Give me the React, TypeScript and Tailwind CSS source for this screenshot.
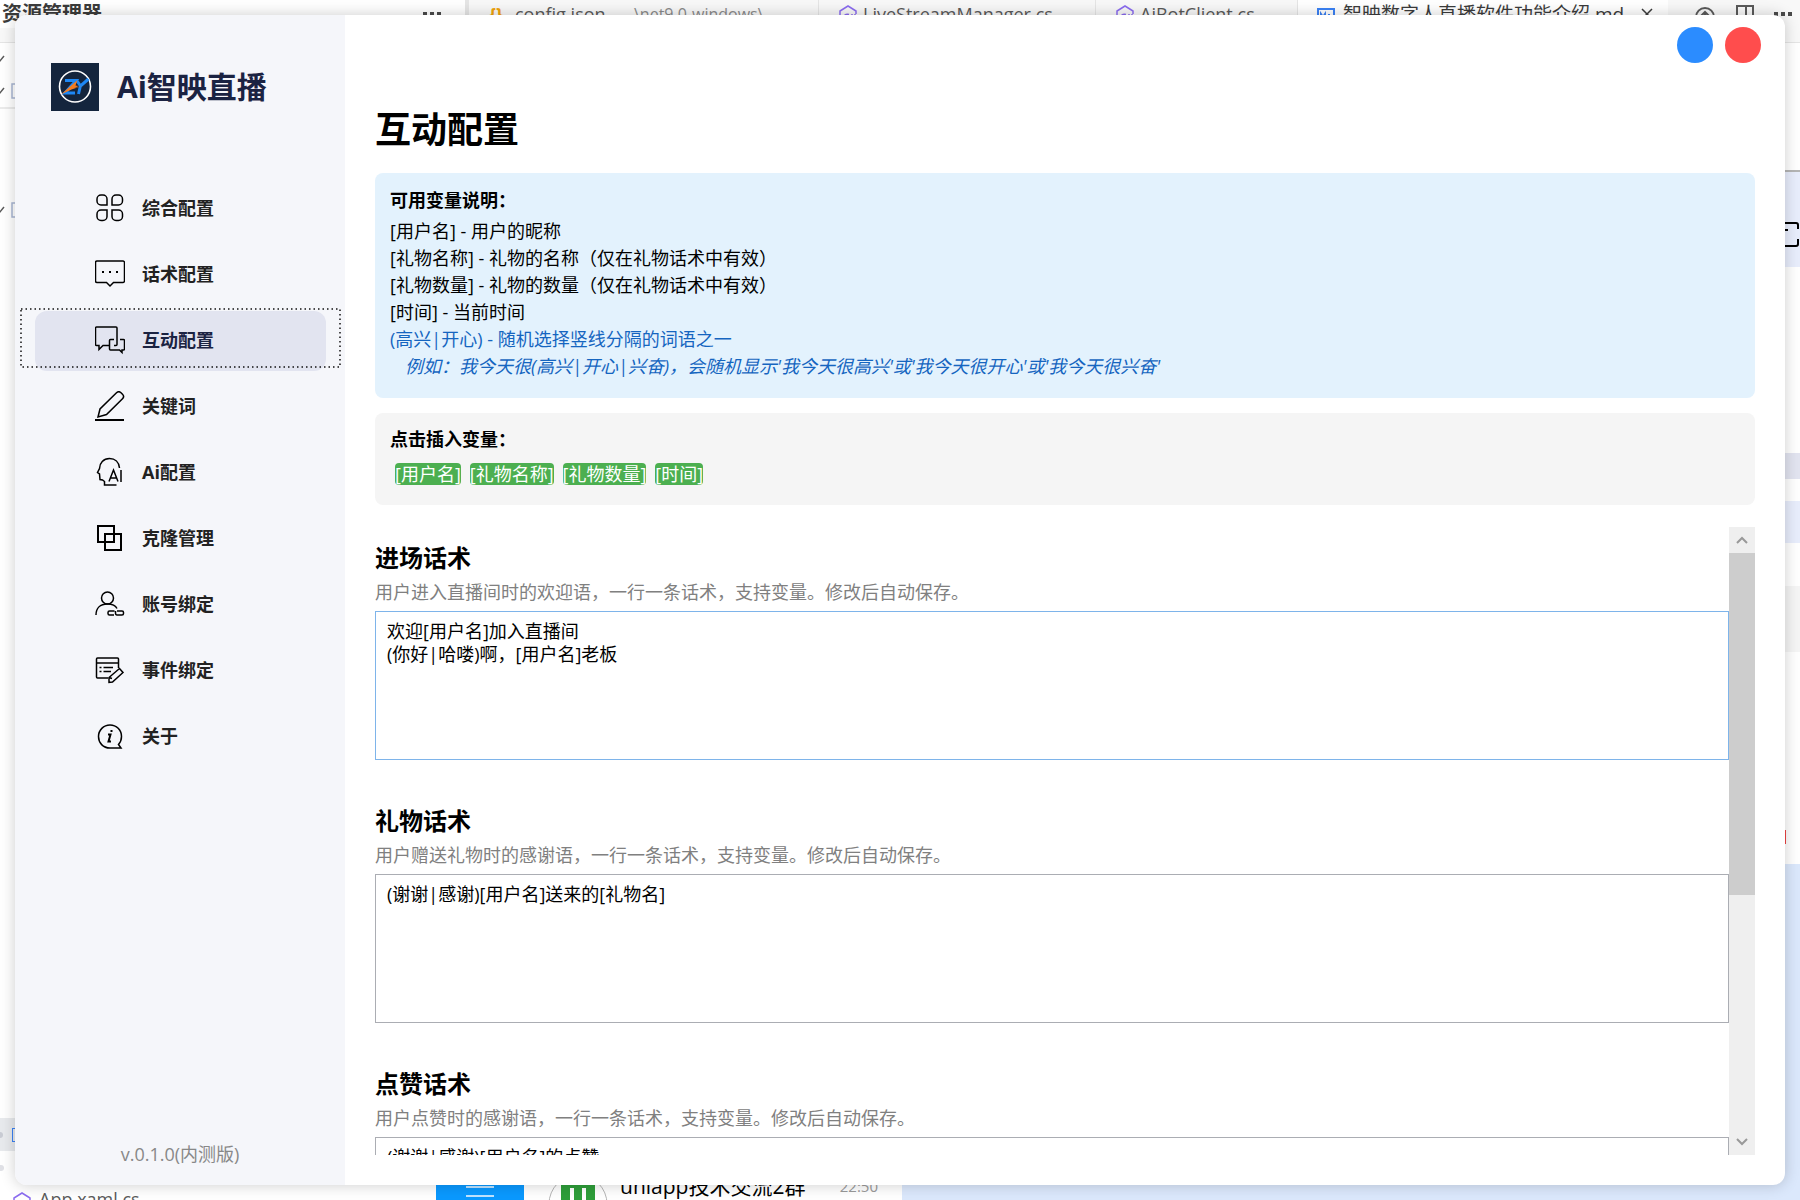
import React, { useState } from 'react';
import { clsx } from 'clsx';

interface NavItem {
  id: string;
  label: string;
  icon: React.ReactNode;
}

interface ScriptSection {
  id: string;
  title: string;
  hint: string;
  value: string;
}

const ICON = {
  width: 30,
  height: 30,
  viewBox: '0 0 30 30',
  fill: 'none',
  stroke: '#000',
  strokeWidth: 1.5,
  'aria-hidden': true,
};

const NAV_ITEMS: NavItem[] = [
  {
    id: 'general',
    label: '综合配置',
    icon: (
      <svg {...ICON}>
        <path d="M6 2h2a4 4 0 0 1 4 4v6H6a4 4 0 0 1-4-4V6a4 4 0 0 1 4-4zM17 12V6a4 4 0 0 1 4-4h2.500a4 4 0 0 1 4 4v2a4 4 0 0 1-4 4zM6 17h6v6.500a4 4 0 0 1-4 4H6a4 4 0 0 1-4-4V21a4 4 0 0 1 4-4zM17 17h6.500a4 4 0 0 1 4 4v2.500a4 4 0 0 1-4 4H21a4 4 0 0 1-4-4z" />
      </svg>
    ),
  },
  {
    id: 'scripts',
    label: '话术配置',
    icon: (
      <svg {...ICON}>
        <path d="M2 2h26a1.500 1.500 0 0 1 1.500 1.500v18.500a1.500 1.500 0 0 1-1.500 1.500h-9.500L15 27l-3.500-3.500H2a1.500 1.500 0 0 1-1.500-1.500V3.500A1.500 1.500 0 0 1 2 2z" />
        <path d="M7 13h2M14 13h2M21 13h2" strokeWidth="2" />
      </svg>
    ),
  },
  {
    id: 'interaction',
    label: '互动配置',
    icon: (
      <svg {...ICON}>
        <path d="M14 20.500H8L4 24.500v-4H1.500a1 1 0 0 1-1-1V3a1 1 0 0 1 1-1H21a1 1 0 0 1 1 1v16.500a1 1 0 0 1-1 1h-2" />
        <path d="M19 14.500h-3.500a1 1 0 0 0-1 1v8.500a1 1 0 0 0 1 1h9l2.500 2.500V25h1.500a1 1 0 0 0 1-1v-8.500a1 1 0 0 0-1-1H25" />
      </svg>
    ),
  },
  {
    id: 'keywords',
    label: '关键词',
    icon: (
      <svg {...ICON}>
        <path d="M3 26l2-8L21.500 1.800a3.200 3.200 0 0 1 4.500 0l1.500 1.500a3.200 3.200 0 0 1 0 4.500L11.500 23.500z" />
        <path d="M0 29h29" strokeWidth="2" />
      </svg>
    ),
  },
  {
    id: 'ai',
    label: 'Ai配置',
    icon: (
      <svg {...ICON}>
        <path d="M24.500 11C24 5 20 1.500 14.500 1.500 8.500 1.500 4.500 6 4.500 11.500L2.500 15.500l2 1.500.500 5.500 2.500.500 2 1.500V28H21.500" />
        <path d="M14 24.500L18.500 13 23 24.500M15.500 21h6M26 13v12" />
      </svg>
    ),
  },
  {
    id: 'clone',
    label: '克隆管理',
    icon: (
      <svg {...ICON} strokeWidth={2}>
        <path d="M3 3h16v16H3zM10 11h16v16H10z" />
      </svg>
    ),
  },
  {
    id: 'account',
    label: '账号绑定',
    icon: (
      <svg {...ICON}>
        <circle cx="12.500" cy="9" r="6" />
        <path d="M1 26c0-6.500 4-11 11.500-11 4.500 0 8 1.500 9.500 4.500" />
        <path d="M19.500 22h-5a1.500 1.500 0 0 0-1.500 1.500v1A1.500 1.500 0 0 0 14.500 26H19M22 22h5a1.500 1.500 0 0 1 1.500 1.500v1A1.500 1.500 0 0 1 27 26h-5c-1.500 0-1.500-1-1.500-2v-2" />
      </svg>
    ),
  },
  {
    id: 'events',
    label: '事件绑定',
    icon: (
      <svg {...ICON}>
        <path d="M23.500 13V4a1 1 0 0 0-1-1h-20a1 1 0 0 0-1 1v18a1 1 0 0 0 1 1H13M1.500 8h22" />
        <path d="M4.500 12.500h2M8.500 12.500H18M4.500 16.500h2M8.500 16.500H16" />
        <path d="M14 27.500v-5l10.500-9 3.500 4L17.500 27zM14 22.500l3 1" />
      </svg>
    ),
  },
  {
    id: 'about',
    label: '关于',
    icon: (
      <svg {...ICON}>
        <path d="M23.500 23.500L26 27H15C8 27 3.500 21.800 3.500 15.500S8.500 4 15 4s11.500 5 11.500 11.500c0 3.200-1.200 6-3 8z" />
        <path d="M13 13.500h2.500l-2 7H16M16.500 9v2" strokeWidth="2" />
      </svg>
    ),
  },
];

const VARIABLES = ['[用户名]', '[礼物名称]', '[礼物数量]', '[时间]'];

const SECTIONS: ScriptSection[] = [
  {
    id: 'enter',
    title: '进场话术',
    hint: '用户进入直播间时的欢迎语，一行一条话术，支持变量。修改后自动保存。',
    value: '欢迎[用户名]加入直播间\n(你好|哈喽)啊，[用户名]老板',
  },
  {
    id: 'gift',
    title: '礼物话术',
    hint: '用户赠送礼物时的感谢语，一行一条话术，支持变量。修改后自动保存。',
    value: '(谢谢|感谢)[用户名]送来的[礼物名]',
  },
  {
    id: 'like',
    title: '点赞话术',
    hint: '用户点赞时的感谢语，一行一条话术，支持变量。修改后自动保存。',
    value: '(谢谢|感谢)[用户名]的点赞',
  },
];

function Logo() {
  return (
    <svg width="48" height="48" viewBox="0 0 48 48" aria-hidden="true">
      <path d="M0 0h48v48H0z" fill="#14253d" />
      <circle cx="24" cy="23.500" r="15.500" fill="none" stroke="#fff" strokeWidth="1.600" />
      <path d="M14 17.500h11L14 30h10M25.500 17l4 6 8-7M29.500 22.500L27.500 31" fill="none" stroke="#1e88f5" strokeWidth="3" />
      <path d="M10 31.500L26.500 17l-2 5.500 3 .500-4 2 9-2.500-12 4z" fill="#f57c1f" />
    </svg>
  );
}

function CSharpIcon() {
  return (
    <svg width="18" height="20" viewBox="0 0 18 20" fill="none" stroke="#8b6cf0" strokeWidth="1.500" className="shrink-0" aria-hidden="true">
      <path d="M5 18l-4-2.500V6l8-5 8 5v3" />
      <path d="M10 9.500c-3.500-1-5 1-5 3.500s1.500 4.500 5 3.500M13 9v6M16 9v6M11.500 11h6M11.500 13.500h6" />
    </svg>
  );
}

function DotsIcon() {
  return (
    <svg className="mt-3" width="18" height="5" viewBox="0 0 18 5" fill="#4a4a4a" aria-hidden="true">
      <path d="M0 0h4v4H0zM7 0h4v4H7zM14 0h4v4h-4z" />
    </svg>
  );
}

// Editor and chat windows that show around the edges of the app window
function Desktop() {
  return (
    <div className="absolute inset-0 overflow-hidden bg-white text-[18px] text-[#5a5a5a]" aria-hidden="true">
      <div className="flex h-[43px] items-start whitespace-nowrap border-b border-[#e5e5e5] bg-[#f8f8f8] leading-[28px]">
        <div className="flex w-[465px] items-start justify-between bg-white pl-[2px] pr-[24px]">
          <span className="text-[20px] font-bold text-[#3b3b3b]">资源管理器</span>
          <DotsIcon />
        </div>
        <div className="flex h-full w-[354px] items-start border-l-4 border-r border-[#e5e5e5] pl-[20px]">
          <span className="w-[26px] font-bold text-[#f0a30a]">{'{}'}</span>
          <span>config.json</span>
          <span className="ml-5 text-[16px] text-[#8a8a8a]">..\net9.0-windows\</span>
        </div>
        <div className="flex h-full w-[277px] gap-[6px] border-r border-[#e5e5e5] pl-[20px]">
          <span className="pt-[5px]"><CSharpIcon /></span>
          <span>LiveStreamManager.cs</span>
        </div>
        <div className="flex h-full w-[202px] gap-[6px] border-r border-[#e5e5e5] pl-[20px]">
          <span className="pt-[5px]"><CSharpIcon /></span>
          <span>AiBotClient.cs</span>
        </div>
        <div className="flex h-full w-[370px] bg-white pl-[19px] text-[#3b3b3b]">
          <svg className="mt-2 mr-2" width="18" height="16" viewBox="0 0 18 16" fill="none" stroke="#3b82f6" strokeWidth="2">
            <path d="M1 1h16v14H1zM4 11V6l2 3 2-3v5M12 6v5M10 9l2 2 2-2" />
          </svg>
          <span className="flex-1 text-[19px]">智映数字人直播软件功能介绍.md</span>
          <svg className="mt-2 mr-[15px]" width="12" height="12" viewBox="0 0 12 12" fill="none" stroke="#3b3b3b" strokeWidth="1.500">
            <path d="M1 1l10 10M11 1L1 11" />
          </svg>
        </div>
        <div className="flex flex-1 items-start gap-[20px] pl-[26px]">
          <svg className="mt-[6px]" width="22" height="22" viewBox="0 0 22 22" fill="none" stroke="#5a5a5a" strokeWidth="2">
            <circle cx="11" cy="11" r="9" />
            <path d="M11 6v8M7 10l4-4 4 4" />
          </svg>
          <svg className="mt-[5px]" width="18" height="18" viewBox="0 0 18 18" fill="none" stroke="#5a5a5a" strokeWidth="2">
            <path d="M1 1h16v16H1zM10 1v16" />
          </svg>
          <DotsIcon />
        </div>
      </div>

      {/* explorer tree */}
      <div className="absolute left-0 top-[43px] flex h-full w-[436px] flex-col bg-white">
        <svg width="16" height="200" viewBox="0 0 16 200" fill="none" stroke="#5a5a5a" strokeWidth="1.500" className="shrink-0">
          <path d="M-4 15l3 4 5-6M-4 47l3 4 5-6M-4 166l3 4 5-6" />
          <path d="M16 41h-4v14h4M16 160h-4v14h4" stroke="#a9b6d3" />
          <path d="M0 65h16" stroke="#e5e5e5" />
        </svg>
        <div className="mt-[875px] flex h-[33px] w-4 shrink-0 items-center bg-[#e8eaed]">
          <span className="h-[6px] w-1 rounded-r-full bg-[#c9ccd4]" />
          <span className="ml-[9px] h-[14px] w-1 border-y border-l border-[#3b82f6]" />
        </div>
        <div className="flex h-[33px] w-4 shrink-0 items-center">
          <span className="h-[6px] w-1 rounded-r-full bg-[#e0e1e6]" />
        </div>
        <div className="flex items-start gap-2 pl-[13px] pt-2">
          <CSharpIcon />
          <span className="leading-[14px]">App.xaml.cs</span>
        </div>
      </div>

      {/* windows on the right */}
      <div className="absolute right-0 top-[170px] flex h-full w-4 flex-col border-t-2 border-[#b5b5b5] bg-[#dbe8fc]">
        <div className="h-[95px] shrink-0 bg-[#e8edfc] pt-[50px]">
          <svg width="16" height="26" viewBox="0 0 16 26" fill="none" stroke="#000" strokeWidth="2">
            <path d="M0 1h12a2 2 0 0 1 2 2v4M14 17v5a2 2 0 0 1-2 2H0M0 8h4" />
          </svg>
        </div>
        <div className="h-[186px] shrink-0 bg-white" />
        <div className="h-[26px] shrink-0 bg-[#e2e4f0]" />
        <div className="h-[22px] shrink-0 bg-white" />
        <div className="h-[42px] shrink-0 bg-[#e8edfc]" />
        <div className="h-[43px] shrink-0 bg-white" />
        <div className="h-[66px] shrink-0 bg-[#f5f5f5]" />
        <div className="h-[212px] shrink-0 bg-white pt-[178px]">
          <div className="h-[14px] w-[2px] bg-[#ef4444]" />
        </div>
      </div>

      {/* chat list */}
      <div className="absolute bottom-0 left-[436px] right-0 flex h-[30px] items-end bg-[#dbe8fc]">
        <div className="flex h-full w-[88px] flex-col items-center justify-end gap-[7px] bg-[#0a99ff] pb-[3px]">
          <span className="h-[2px] w-7 bg-[#bfe3ff]" />
          <span className="h-[2px] w-7 bg-[#bfe3ff]" />
        </div>
        <div className="flex h-full w-[378px] items-center bg-white pl-[24px]">
          <svg width="60" height="30" viewBox="0 0 60 30" fill="none">
            <circle cx="30" cy="34" r="29" stroke="#b5b5b5" />
            <path d="M13 30V10h34v20" fill="#2e9e3a" />
            <path d="M24 30V18M36 30V18" stroke="#fff" strokeWidth="4" />
          </svg>
          <span className="ml-[12px] flex-1 pt-[2px] text-[21px] leading-[22px] text-black">uniapp技术交流2群</span>
          <span className="pr-[24px] pt-[2px] text-[15px] leading-[22px] text-[#9a9a9a]">22:50</span>
        </div>
      </div>
    </div>
  );
}

function Sidebar({ active, onSelect }: { active: string; onSelect: (id: string) => void }) {
  return (
    <aside className="flex w-[330px] shrink-0 flex-col bg-[#f5f6fa]">
      <div className="flex items-center gap-[18px] pl-9 pt-12">
        <Logo />
        <span className="text-[30px] font-bold leading-[48px] text-[#1b2342]">Ai智映直播</span>
      </div>

      <nav className="mt-[68px] flex flex-col gap-[6px] pl-5 pr-[19px]">
        {NAV_ITEMS.map((item) => (
          <button
            key={item.id}
            type="button"
            onClick={() => onSelect(item.id)}
            className={clsx(
              'relative flex h-[60px] items-center gap-[17px] rounded-xl pb-[2px] pl-[60px] text-[18px] font-bold leading-6',
              active === item.id ? 'bg-[#e2e4f0] text-[#1b2342]' : 'text-[#222]'
            )}
          >
            {item.icon}
            <span>{item.label}</span>
            {active === item.id && (
              <svg className="absolute -left-[15px] -top-[3px] h-[60px] w-[321px]" fill="none" aria-hidden="true">
                <rect x="1" y="1" width="319" height="58" stroke="#111" strokeWidth="1.500" strokeDasharray="1.500 3" />
              </svg>
            )}
          </button>
        ))}
      </nav>

      <p className="mt-auto pb-[19px] text-center text-[18px] leading-6 text-[#888]">v.0.1.0(内测版)</p>
    </aside>
  );
}

function ScrollBar() {
  return (
    <div className="flex w-[26px] shrink-0 flex-col bg-[#efefef]">
      <button type="button" aria-label="向上滚动" className="flex h-[26px] shrink-0 items-center justify-center">
        <svg width="12" height="8" viewBox="0 0 12 8" fill="none" stroke="#999" strokeWidth="2">
          <path d="M1 7l5-5 5 5" />
        </svg>
      </button>
      <div className="flex flex-1 flex-col">
        <div className="flex-[19] bg-[#cdcdcd]" />
        <div className="flex-[13]" />
      </div>
      <button type="button" aria-label="向下滚动" className="flex h-[26px] shrink-0 items-center justify-center">
        <svg width="12" height="8" viewBox="0 0 12 8" fill="none" stroke="#999" strokeWidth="2">
          <path d="M1 1l5 5 5-5" />
        </svg>
      </button>
    </div>
  );
}

export default function App() {
  const [active, setActive] = useState('interaction');
  const [values, setValues] = useState<Record<string, string>>(
    Object.fromEntries(SECTIONS.map((s) => [s.id, s.value]))
  );
  const [current, setCurrent] = useState('enter');

  const update = (id: string, value: string) => setValues((prev) => ({ ...prev, [id]: value }));

  return (
    <div className="relative h-screen overflow-hidden p-[15px] font-['Open_Sans','Noto_Sans_CJK_SC',sans-serif]">
      <Desktop />

      <div className="relative flex h-full overflow-hidden rounded-xl bg-white shadow-[0_0_15px_rgba(0,0,0,0.2)]">
        <Sidebar active={active} onSelect={setActive} />

        <main className="flex min-w-0 flex-1 flex-col pb-[30px] pl-[30px] pr-[30px]">
          {/* Window buttons */}
          <div className="-mr-[6px] flex justify-end gap-3 pt-3">
            <button type="button" aria-label="最小化" className="h-9 w-9 rounded-full bg-[#2b8cff]" />
            <button type="button" aria-label="关闭" className="h-9 w-9 rounded-full bg-[#ff4d4d]" />
          </div>

          <h1 className="mt-[45px] text-[36px] font-bold leading-[44px] text-black">互动配置</h1>

          {/* Variable help */}
          <div className="mt-[21px] rounded-lg bg-[#e3f2fd] px-[15px] pb-[18px] pt-[15px] text-[18px] leading-[27px] text-black">
            <h2 className="mb-[6px] font-bold leading-6">可用变量说明：</h2>
            <p>[用户名] - 用户的昵称</p>
            <p>[礼物名称] - 礼物的名称（仅在礼物话术中有效）</p>
            <p>[礼物数量] - 礼物的数量（仅在礼物话术中有效）</p>
            <p>[时间] - 当前时间</p>
            <p className="text-[#1565c0]">(高兴|开心) - 随机选择竖线分隔的词语之一</p>
            <p className="pl-[15px] italic text-[#1565c0]">
              例如：我今天很(高兴|开心|兴奋)，会随机显示'我今天很高兴'或'我今天很开心'或'我今天很兴奋'
            </p>
          </div>

          {/* Insert buttons */}
          <div className="mt-[15px] rounded-lg bg-[#f5f5f5] px-[15px] pb-5 pt-[14px]">
            <h2 className="text-[18px] font-bold leading-6 text-black">点击插入变量：</h2>
            <div className="mt-3 flex gap-[9px] pl-[5px]">
              {VARIABLES.map((name) => (
                <button
                  key={name}
                  type="button"
                  onClick={() => update(current, values[current] + name)}
                  className="h-[22px] rounded bg-[#4caf50] text-[18px] leading-[22px] text-white"
                >
                  {name}
                </button>
              ))}
            </div>
          </div>

          <div className="mt-[22px] flex min-h-0 flex-1">
            <div className="flex min-w-0 flex-1 flex-col gap-[30px] overflow-hidden">
              {SECTIONS.map((section) => (
                <section key={section.id} className="shrink-0 pt-[15px]">
                  <label htmlFor={section.id} className="block text-[24px] font-bold leading-8 text-black">
                    {section.title}
                  </label>
                  <p className="mb-[5px] mt-1 text-[18px] leading-7 text-[#808080]">{section.hint}</p>
                  <textarea
                    id={section.id}
                    value={values[section.id]}
                    onChange={(e) => update(section.id, e.target.value)}
                    onFocus={() => setCurrent(section.id)}
                    className={clsx(
                      'block h-[149px] w-full resize-none border bg-white px-[11px] py-2 text-[18px] leading-[23px] text-black outline-none',
                      current === section.id ? 'border-[#7eb4ea]' : 'border-[#abadb3]'
                    )}
                  />
                </section>
              ))}
            </div>
            <ScrollBar />
          </div>
        </main>
      </div>
    </div>
  );
}
